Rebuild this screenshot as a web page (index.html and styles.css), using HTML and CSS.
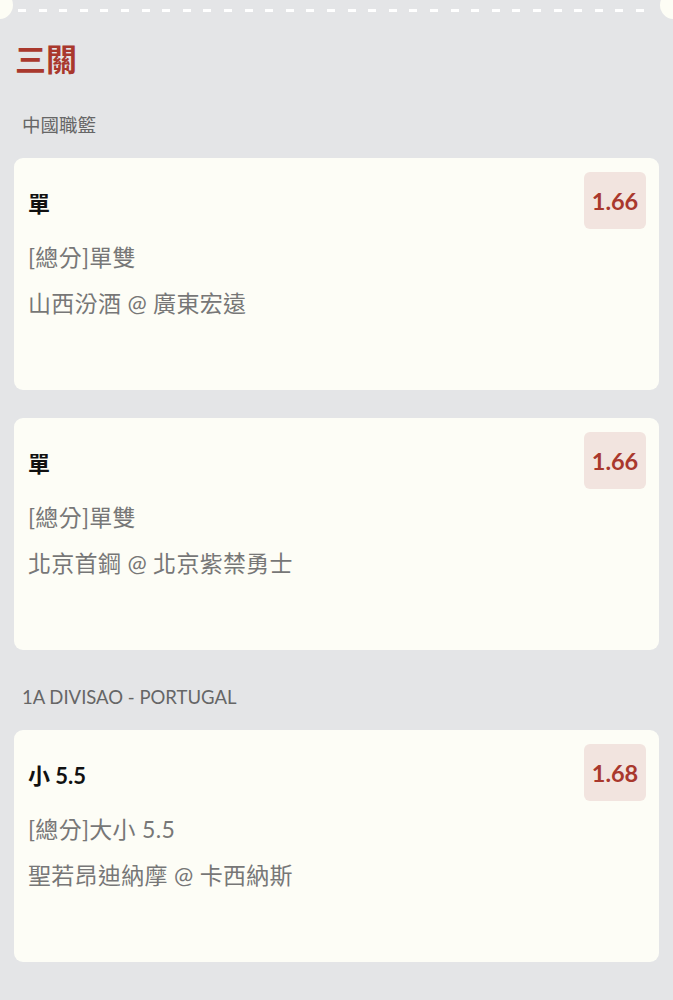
FILE: index.html
```html
<!DOCTYPE html>
<html lang="zh-Hant">
<head>
<meta charset="utf-8">
<link rel="stylesheet" href="styles.css">
</head>
<body>
<div class="page">
  <div class="ticket-edge"></div>
  <h1 class="title">三關</h1>

  <div class="league">中國職籃</div>
  <div class="card">
    <div class="card-head">
      <div class="pick">單</div>
      <div class="odds">1.66</div>
    </div>
    <div class="market">[總分]單雙</div>
    <div class="teams">山西汾酒 @ 廣東宏遠</div>
  </div>
  <div class="card card-next">
    <div class="card-head">
      <div class="pick">單</div>
      <div class="odds">1.66</div>
    </div>
    <div class="market">[總分]單雙</div>
    <div class="teams">北京首鋼 @ 北京紫禁勇士</div>
  </div>

  <div class="league league-next">1A DIVISAO - PORTUGAL</div>
  <div class="card">
    <div class="card-head">
      <div class="pick">小 5.5</div>
      <div class="odds">1.68</div>
    </div>
    <div class="market">[總分]大小 5.5</div>
    <div class="teams">聖若昂迪納摩 @ 卡西納斯</div>
  </div>
</div>
</body>
</html>
```

FILE: styles.css
```css
* { box-sizing: border-box; }
html, body { margin: 0; padding: 0; }
body {
  background: #e4e5e7;
  font-family: Lato, "Noto Sans CJK TC", "Noto Sans", sans-serif;
  width: 673px;
  height: 1000px;
  overflow: hidden;
}
.page { padding-bottom: 40px; }
.ticket-edge {
  position: relative;
  height: 22px;
  background-image: repeating-linear-gradient(to right, #ffffff 0, #ffffff 8px, transparent 8px, transparent 20.6px);
  background-size: calc(100% - 36px) 3px;
  background-position: 18px 9px;
  background-repeat: no-repeat;
}
.ticket-edge::before,
.ticket-edge::after {
  content: "";
  position: absolute;
  top: -9px;
  width: 28px;
  height: 28px;
  border-radius: 50%;
  background: #fdfdf5;
}
.ticket-edge::before { left: -15px; }
.ticket-edge::after { right: -15px; }
.title {
  margin: 17px 0 0;
  padding-left: 15px;
  font-size: 31px;
  line-height: 40px;
  font-weight: 700;
  color: #a9382d;
}
.league {
  margin: 34px 0 0;
  padding-left: 22px;
  font-size: 18.5px;
  line-height: 24px;
  color: #666666;
}
.league-next { margin-top: 35px; }
.card {
  margin: 21px 14px 0;
  height: 232px;
  padding: 14px 13px 0 14px;
  background: #fdfdf6;
  border-radius: 9px;
}
.card-next { margin-top: 28px; }
.card-head {
  display: flex;
  justify-content: space-between;
  align-items: center;
}
.pick {
  font-size: 22px;
  font-weight: 700;
  color: #111111;
  padding-top: 3px;
}
.odds {
  width: 62px;
  height: 57px;
  display: flex;
  align-items: center;
  justify-content: center;
  background: #f2e4df;
  border-radius: 6px;
  font-size: 23.5px;
  font-weight: 700;
  color: #a9382d;
}
.market, .teams {
  font-size: 23px;
  line-height: 46px;
  color: #777777;
  letter-spacing: 0.3px;
}
.market { margin-top: 5px; }
```
